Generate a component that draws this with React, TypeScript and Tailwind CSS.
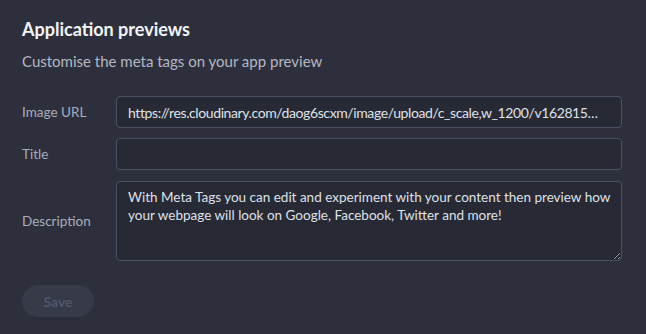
import React from "react";

export default function App() {
  return (
    <div
      className="w-[646px] h-[334px] bg-[#2d303c] px-[22px] pt-[17px] text-[#c9ccd6] overflow-hidden"
      style={{ fontFamily: "Lato, 'Noto Sans', sans-serif" }}
    >
      <h1 className="text-[18px] leading-[24px] font-bold text-[#f3f4f7]">Application previews</h1>
      <p className="mt-[10px] text-[15px] leading-[20px] text-[#b3b7c4]">Customise the meta tags on your app preview</p>
      <div className="mt-[25px] grid grid-cols-[94px_506px] gap-y-[10px] items-center">
        <label className="text-[13.5px] text-[#a9adbb]">Image URL</label>
        <div className="h-[32px] rounded-[4px] border border-[#4b5064] bg-[#272a35] px-[11px] flex items-center text-[14px] tracking-[-0.4px] text-[#dfe1e8] whitespace-nowrap overflow-hidden">
          https://res.cloudinary.com/daog6scxm/image/upload/c_scale,w_1200/v162815…
        </div>
        <label className="text-[13.5px] text-[#a9adbb]">Title</label>
        <div className="h-[32px] rounded-[4px] border border-[#4b5064] bg-[#272a35]" />
        <label className="mt-[1px] text-[13.5px] text-[#a9adbb]">Description</label>
        <textarea
          className="mt-[1px] h-[80px] rounded-[4px] border border-[#4b5064] bg-[#272a35] pl-[11px] pr-[6px] py-[6px] text-[13.5px] leading-[18px] text-[#dfe1e8] outline-none resize-y"
          style={{ fontFamily: "Lato, 'Noto Sans', sans-serif" }}
          defaultValue="With Meta Tags you can edit and experiment with your content then preview how your webpage will look on Google, Facebook, Twitter and more!"
        />
      </div>
      <button className="mt-[24px] w-[72px] h-[32px] rounded-full bg-[#363a49] text-[14px] font-bold text-[#4f566c]">
        Save
      </button>
    </div>
  );
}
